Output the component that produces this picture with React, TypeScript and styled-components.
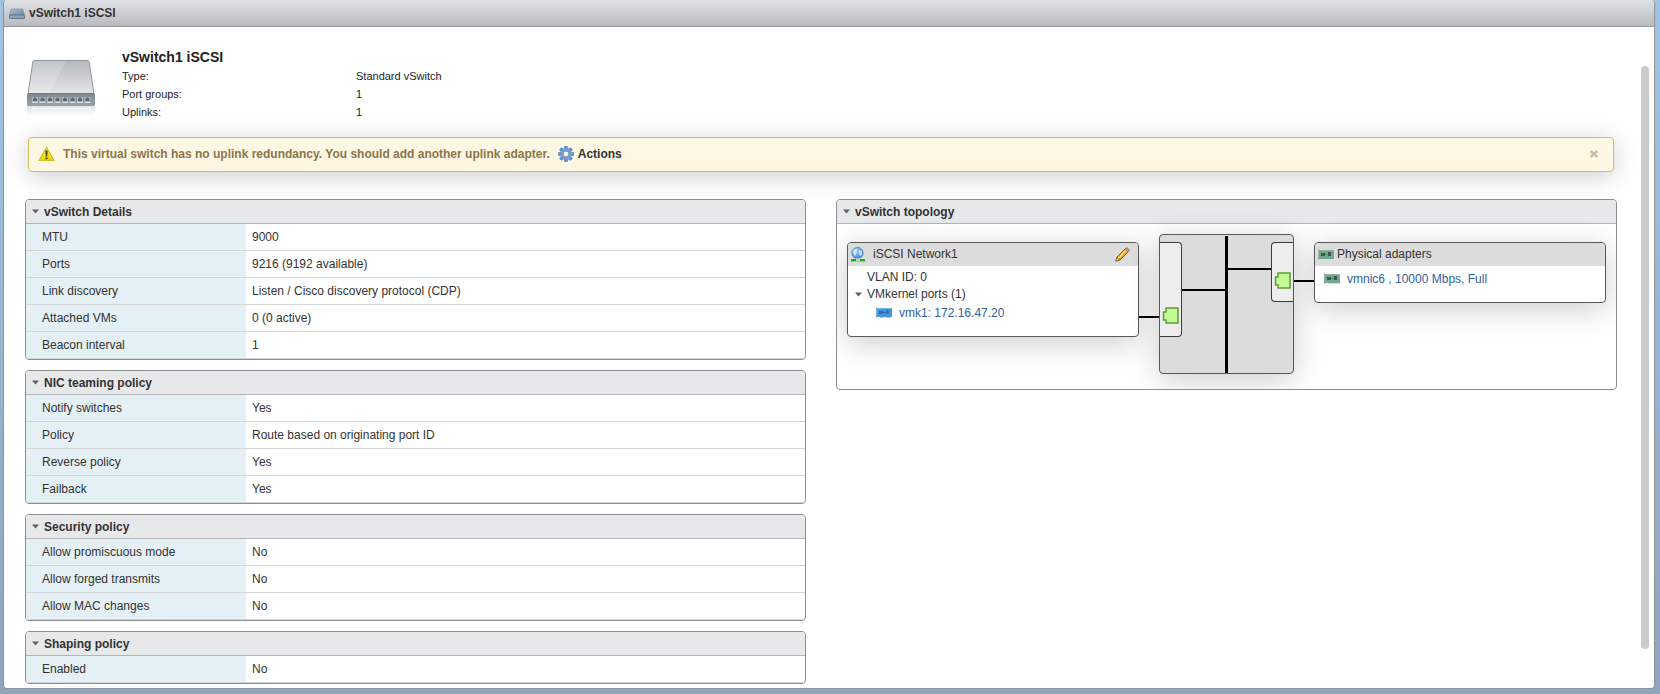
import React from "react";
import styled, { createGlobalStyle } from "styled-components";

const GlobalStyle = createGlobalStyle`
  *, *::before, *::after { box-sizing: border-box; }
  html { min-height: 100%; background: linear-gradient(#a0c4e4, #8fa4bd) no-repeat; }
  body {
    margin: 0;
    color: #333;
    font-family: "Liberation Sans", Arial, sans-serif;
    font-size: 12px;
    line-height: 16px;
  }
  svg { display: block; flex: none; }
`;

const Window = styled.main`
  margin: 0 5px 5px 3px;
  background: #fff;
  border: 1px solid #8f9296;
  border-top: 0;
  border-radius: 4px;
  overflow: hidden;
`;

const TitleBar = styled.header`
  display: flex;
  align-items: center;
  gap: 4px;
  height: 27px;
  padding: 0 5px;
  background: linear-gradient(#e0e1e5, #b9bbbf);
  border-bottom: 1px solid #999b9f;
  font-weight: bold;
`;

const Body = styled.div`
  display: flex;
  padding-right: 5px;
`;

const Content = styled.div`
  flex: 1;
  min-width: 0;
  padding: 20px 24px 4px 21px;
`;

const ScrollThumb = styled.div`
  width: 8px;
  margin: 39px 0;
  border-radius: 4px;
  background: #cbcbcb;
`;

const Summary = styled.section`
  display: flex;
  gap: 26px;
  padding-left: 2px;
`;

const DeviceArt = styled.div`
  padding-top: 12px;
`;

const SummaryTitle = styled.h1`
  margin: 0;
  font-size: 14px;
  line-height: 20px;
  color: #222;
`;

const Facts = styled.dl`
  display: grid;
  grid-template-columns: 234px auto;
  margin: 0;
  font-size: 11px;
  line-height: 18px;
  color: #222;

  dt, dd { margin: 0; }
`;

const Banner = styled.section`
  display: flex;
  align-items: center;
  height: 35px;
  margin: 16px 3px 27px;
  padding: 0 14px 2px 9px;
  background: #fdf7e3;
  border: 1px solid #cfbe62;
  border-radius: 4px;
  box-shadow: 0 4px 24px rgba(0, 0, 0, 0.2);
  font-weight: bold;
`;

const BannerText = styled.span`
  margin: 0 8px;
  color: #8e744b;
`;

const PlainButton = styled.button`
  display: flex;
  align-items: center;
  gap: 4px;
  padding: 0;
  border: 0;
  background: none;
  color: inherit;
  font: inherit;
  cursor: pointer;
`;

const CloseButton = styled(PlainButton)`
  margin-left: auto;
`;

const Columns = styled.div`
  display: grid;
  grid-template-columns: 1fr 1fr;
  gap: 30px;
  align-items: start;
`;

const Stack = styled.div`
  display: grid;
  gap: 10px;
`;

const PanelFrame = styled.section`
  border: 1px solid #8e8e90;
  border-radius: 4px;
  overflow: hidden;
`;

const PanelHeading = styled.h2`
  display: flex;
  height: 24px;
  margin: 0;
  padding-left: 6px;
  background: #e7e8ea;
  border-bottom: 1px solid #b4b4b6;
  font-size: 12px;
`;

const Table = styled.table`
  width: 100%;
  border-collapse: separate;
  border-spacing: 0;
  table-layout: fixed;

  th, td {
    height: 27px;
    border-bottom: 1px solid #d4d5d6;
    font-weight: normal;
    text-align: left;
  }
  th {
    width: 220px;
    padding: 0 0 0 16px;
    background: #e4eff6;
  }
  td { padding: 0 6px; }
`;

const Topology = styled.div`
  display: flex;
  align-items: flex-start;
  padding: 10px 10px 15px;
`;

const Node = styled.article<{ $height: number }>`
  flex: 1;
  min-width: 0;
  min-height: ${(p) => p.$height}px;
  margin-top: 8px;
  background: #fff;
  border: 1px solid #58585a;
  border-radius: 4px;
  box-shadow: 0 6px 30px rgba(0, 0, 0, 0.2);
`;

const NodeHeader = styled.header<{ $gap: number }>`
  display: flex;
  align-items: center;
  gap: ${(p) => p.$gap}px;
  height: 23px;
  padding: 0 8px 0 3px;
  background: #dcdcdc;
  border-radius: 3px 3px 0 0;
`;

const NodeTitle = styled.h3`
  flex: 1;
  margin: 0;
  padding-bottom: 2px;
  font-size: 12px;
  font-weight: normal;
`;

const NodeBody = styled.div<{ $top: number }>`
  padding: ${(p) => p.$top}px 7px 0;
`;

const NodeLine = styled.div<{ $indent: number }>`
  display: flex;
  align-items: center;
  gap: 7px;
  min-height: 18px;
  padding-left: ${(p) => p.$indent}px;
`;

const NodeSubLine = styled(NodeLine)`
  min-height: 22px;
`;

const NodeLink = styled.a`
  color: #31609e;
  text-decoration: none;
`;

const Wire = styled.div<{ $top: number }>`
  width: 20px;
  height: 2px;
  margin-top: ${(p) => p.$top}px;
  background: #000;
`;

const Switch = styled.div`
  display: flex;
  width: 135px;
  height: 140px;
  background: #dcdcdc;
  border: 1px solid #58585a;
  border-radius: 4px;
  box-shadow: 0 6px 30px rgba(0, 0, 0, 0.2);
`;

const PortGroup = styled.div<{ $side: "left" | "right"; $height: number }>`
  display: flex;
  align-items: flex-end;
  width: 22px;
  height: ${(p) => p.$height}px;
  margin-top: 7px;
  padding: 0 2px 12px;
  background: #eee;
  border: 1px solid #3c3c3e;
  border-width: ${(p) => (p.$side === "left" ? "1px 1px 1px 0" : "1px 0 1px 1px")};
  border-radius: ${(p) => (p.$side === "left" ? "0 4px 4px 0" : "4px 0 0 4px")};
`;

const Trunk = styled.div<{ $top: number }>`
  flex: 1;
  height: 2px;
  margin-top: ${(p) => p.$top}px;
  background: #000;
`;

const Bus = styled.div`
  width: 3px;
  margin-top: 1px;
  background: #000;
`;

const SwitchIcon = () => (
  <svg width="16" height="16" viewBox="0 0 16 16" aria-hidden="true">
    <defs>
      <linearGradient id="sw" x1="0" y1="0" x2="1" y2="1">
        <stop offset="0" stopColor="#b3bfcb" />
        <stop offset="1" stopColor="#6e859c" />
      </linearGradient>
    </defs>
    <path d="M2.200 4h11.600L15.500 10.500H.5z" fill="url(#sw)" stroke="#8794a3" strokeWidth=".8" />
    <rect x=".5" y="10" width="15" height="3.500" rx=".6" fill="#8fa3b8" stroke="#5c6c80" strokeWidth=".9" />
  </svg>
);

const DeviceIcon = () => (
  <svg width="69" height="58" viewBox="0 0 69 58" aria-hidden="true">
    <defs>
      <linearGradient id="lid" x1="0" y1="0" x2="0" y2="1">
        <stop offset="0" stopColor="#b5b8bc" />
        <stop offset="1" stopColor="#e3e5e7" />
      </linearGradient>
      <linearGradient id="gloss" x1="0" y1="0" x2="0" y2="1">
        <stop offset="0" stopColor="#c3c6c9" />
        <stop offset="1" stopColor="#e9eaec" />
      </linearGradient>
      <linearGradient id="face" x1="0" y1="0" x2="0" y2="1">
        <stop offset="0" stopColor="#7b8791" />
        <stop offset="1" stopColor="#98a2aa" />
      </linearGradient>
      <linearGradient id="fade" x1="0" y1="0" x2="0" y2="1">
        <stop offset="0" stopColor="#dfe2e4" />
        <stop offset="1" stopColor="#fff" />
      </linearGradient>
    </defs>
    <rect x="0" y="47" width="68" height="10" fill="url(#fade)" />
    <path d="M6.500 1.500h55L67 35H1z" fill="url(#lid)" />
    <path d="M6.500 1.500H39L22 35H1z" fill="url(#gloss)" />
    <path d="M1 35L5.800 3q.3-1.500 1.700-1.500h53q1.500 0 1.700 1.500L67 35" fill="none" stroke="#8e979e" />
    <rect x="0" y="34" width="68" height="13" rx="1.500" fill="url(#face)" />
    <path d="M1 34.500h66" stroke="#6e7983" />
    {[0, 1, 2, 3, 4, 5, 6, 7].map((i) => (
      <g key={i} transform={`translate(${5 + i * 7.500} 38)`}>
        <rect x="0" y="0" width="6" height="5" fill="#adb5bb" />
        <path d="M1 4V1.500h1V.5h2v1h1V4z" fill="#5c6770" />
        <path d="M0 5.500h6" stroke="#d9dde0" />
        <path d="M.5 13v-2h5v2" fill="none" stroke="#fff" strokeWidth=".8" />
      </g>
    ))}
  </svg>
);

const WarningIcon = () => (
  <svg width="17" height="16" viewBox="0 0 17 16" aria-hidden="true">
    <defs>
      <linearGradient id="warn" x1="0" y1="0" x2="0" y2="1">
        <stop offset="0" stopColor="#f7ee5a" />
        <stop offset="1" stopColor="#ecd400" />
      </linearGradient>
    </defs>
    <path d="M8.500 1.200L16 14.500H1z" fill="url(#warn)" stroke="#d2c01e" strokeWidth="1.200" strokeLinejoin="round" />
    <path d="M7.300 4.500h2.400l-.5 6H7.800z" fill="#4a4300" />
    <rect x="7.500" y="11.500" width="2" height="1.800" fill="#4a4300" />
  </svg>
);

const GearIcon = () => (
  <svg width="16" height="16" viewBox="0 0 16 16" aria-hidden="true">
    <g fill="#6594d4" stroke="#4c78b4" strokeWidth=".6">
      {[0, 45, 90, 135].map((a) => (
        <rect key={a} x="6.400" y=".3" width="3.200" height="15.400" rx=".8" transform={`rotate(${a} 8 8)`} />
      ))}
    </g>
    <circle cx="8" cy="8" r="4.400" fill="none" stroke="#6f9ddb" strokeWidth="3" />
    <circle cx="8" cy="8" r="2.900" fill="#fdf7e3" stroke="#8391a2" strokeWidth=".9" />
  </svg>
);

const CloseIcon = () => (
  <svg width="10" height="10" viewBox="0 0 10 10" aria-hidden="true">
    <path d="M1.500 2l7 6M8.500 2l-7 6" stroke="#ccbf9f" strokeWidth="2.400" />
  </svg>
);

const Caret = () => (
  <svg width="8" height="5" viewBox="0 0 8 5" aria-hidden="true">
    <path d="M0 .5h7L3.500 4.500z" fill="#606164" />
  </svg>
);

const GlobeIcon = () => (
  <svg width="15" height="15" viewBox="0 0 15 15" aria-hidden="true">
    <defs>
      <radialGradient id="globe" cx=".4" cy=".35" r=".7">
        <stop offset="0" stopColor="#9cc8f6" />
        <stop offset="1" stopColor="#3f7fd6" />
      </radialGradient>
    </defs>
    <circle cx="6.500" cy="6" r="5.700" fill="url(#globe)" stroke="#4c82cc" strokeWidth=".7" />
    <path d="M2 4q1.500-2.500 4-2.500L6.500 3 5 4l1 1.500L5 7 4 9Q2 7 2 4z" fill="#d3e8fc" />
    <path d="M8 3l2.500.5q1 2 .3 4L9 9 8 7.500 8.700 6 7.500 5z" fill="#c7e1fa" />
    <rect x="0" y="12" width="14" height="2.400" fill="#12b31a" />
    <rect x="5" y="11.300" width="4" height="3" fill="#bcd6c0" />
  </svg>
);

const PencilIcon = () => (
  <svg width="15" height="15" viewBox="0 0 15 15" aria-hidden="true">
    <path d="M1 14l1-4L10.500 1.500l3 3L5 13z" fill="#eda91f" stroke="#6c5020" strokeWidth=".9" strokeLinejoin="round" />
    <path d="M3.500 11L11.300 3.200" stroke="#ffe28a" strokeWidth="1.200" />
    <path d="M10.300 2l1-1q.7-.5 1.400.1l1.200 1.200q.6.700.1 1.400L13 4.700z" fill="#d9a5a0" stroke="#76565a" strokeWidth=".7" />
    <path d="M.8 14.200l1-3.600 2.600 2.600z" fill="#f1dfb8" stroke="#54431f" strokeWidth=".6" />
  </svg>
);

const CardIcon = ({ tone }: { tone: "blue" | "green" }) => {
  const blue = tone === "blue";
  return (
    <svg width="16" height="12" viewBox="0 0 16 12" aria-hidden="true">
      <rect x="1" y="1" width="15" height="9" fill={blue ? "#4596de" : "#72a98a"} />
      <path d="M.5 0v11" stroke={blue ? "#8fb7dc" : "#9fb5a8"} />
      <path d="M1 1.500h15" stroke={blue ? "#76b9f1" : "#8dbd9f"} />
      <rect x="3" y="4" width="4" height="3" fill={blue ? "#2f70b2" : "#3d5c51"} />
      <rect x="10" y="3" width="3" height="4" fill={blue ? "#3376b8" : "#3f5260"} />
      <path d="M7 5.500h3" stroke={blue ? "#2c6cab" : "#568a70"} />
      <path d="M4 10.500h4M9.500 10.500h5" stroke={blue ? "#dfc777" : "#cfdcc9"} />
    </svg>
  );
};

const PlugIcon = () => (
  <svg width="17" height="17" viewBox="0 0 17 17" aria-hidden="true">
    <path d="M4 1h12v15H4v-3H1.500V5H4z" fill="#c5fb94" stroke="#629a38" strokeWidth="1.500" />
  </svg>
);

type PanelProps = { title: string; children: React.ReactNode };

const Panel = ({ title, children }: PanelProps) => (
  <PanelFrame>
    <PanelHeading>
      <PlainButton type="button" aria-expanded="true">
        <Caret />
        {title}
      </PlainButton>
    </PanelHeading>
    {children}
  </PanelFrame>
);

const sections = [
  {
    title: "vSwitch Details",
    rows: [
      ["MTU", "9000"],
      ["Ports", "9216 (9192 available)"],
      ["Link discovery", "Listen / Cisco discovery protocol (CDP)"],
      ["Attached VMs", "0 (0 active)"],
      ["Beacon interval", "1"],
    ],
  },
  {
    title: "NIC teaming policy",
    rows: [
      ["Notify switches", "Yes"],
      ["Policy", "Route based on originating port ID"],
      ["Reverse policy", "Yes"],
      ["Failback", "Yes"],
    ],
  },
  {
    title: "Security policy",
    rows: [
      ["Allow promiscuous mode", "No"],
      ["Allow forged transmits", "No"],
      ["Allow MAC changes", "No"],
    ],
  },
  { title: "Shaping policy", rows: [["Enabled", "No"]] },
];

export default function App() {
  return (
    <>
      <GlobalStyle />
      <Window>
        <TitleBar>
          <SwitchIcon />
          vSwitch1 iSCSI
        </TitleBar>
        <Body>
          <Content>
            <Summary>
              <DeviceArt>
                <DeviceIcon />
              </DeviceArt>
              <div>
                <SummaryTitle>vSwitch1 iSCSI</SummaryTitle>
                <Facts>
                  <dt>Type:</dt>
                  <dd>Standard vSwitch</dd>
                  <dt>Port groups:</dt>
                  <dd>1</dd>
                  <dt>Uplinks:</dt>
                  <dd>1</dd>
                </Facts>
              </div>
            </Summary>
            <Banner role="alert">
              <WarningIcon />
              <BannerText>
                This virtual switch has no uplink redundancy. You should add another uplink adapter.
              </BannerText>
              <PlainButton type="button">
                <GearIcon />
                Actions
              </PlainButton>
              <CloseButton type="button" aria-label="Dismiss">
                <CloseIcon />
              </CloseButton>
            </Banner>
            <Columns>
              <Stack>
                {sections.map((s) => (
                  <Panel key={s.title} title={s.title}>
                    <Table>
                      <tbody>
                        {s.rows.map(([label, value]) => (
                          <tr key={label}>
                            <th scope="row">{label}</th>
                            <td>{value}</td>
                          </tr>
                        ))}
                      </tbody>
                    </Table>
                  </Panel>
                ))}
              </Stack>
              <Panel title="vSwitch topology">
                <Topology>
                  <Node $height={95}>
                    <NodeHeader $gap={7}>
                      <GlobeIcon />
                      <NodeTitle>iSCSI Network1</NodeTitle>
                      <PlainButton type="button" aria-label="Edit port group">
                        <PencilIcon />
                      </PlainButton>
                    </NodeHeader>
                    <NodeBody $top={2}>
                      <NodeLine $indent={12}>VLAN ID: 0</NodeLine>
                      <PlainButton type="button" aria-expanded="true">
                        <Caret />
                        VMkernel ports (1)
                      </PlainButton>
                      <NodeSubLine $indent={21}>
                        <CardIcon tone="blue" />
                        <NodeLink href="#vmk1">vmk1: 172.16.47.20</NodeLink>
                      </NodeSubLine>
                    </NodeBody>
                  </Node>
                  <Wire $top={82} />
                  <Switch>
                    <PortGroup $side="left" $height={95}>
                      <PlugIcon />
                    </PortGroup>
                    <Trunk $top={54} />
                    <Bus />
                    <Trunk $top={33} />
                    <PortGroup $side="right" $height={60}>
                      <PlugIcon />
                    </PortGroup>
                  </Switch>
                  <Wire $top={46} />
                  <Node $height={61}>
                    <NodeHeader $gap={3}>
                      <CardIcon tone="green" />
                      <NodeTitle>Physical adapters</NodeTitle>
                    </NodeHeader>
                    <NodeBody $top={4}>
                      <NodeLine $indent={2}>
                        <CardIcon tone="green" />
                        <NodeLink href="#vmnic6">vmnic6 , 10000 Mbps, Full</NodeLink>
                      </NodeLine>
                    </NodeBody>
                  </Node>
                </Topology>
              </Panel>
            </Columns>
          </Content>
          <ScrollThumb />
        </Body>
      </Window>
    </>
  );
}
